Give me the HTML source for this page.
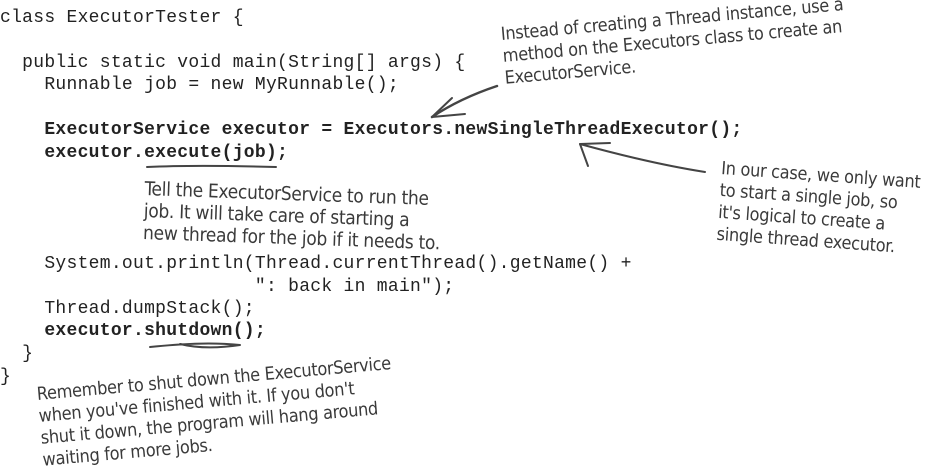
<!DOCTYPE html>
<html><head><meta charset="utf-8"><style>
body{margin:0;width:925px;height:469px;background:#fff;position:relative;overflow:hidden}
.c{position:absolute;left:0;font:18px/22px "Liberation Mono",monospace;color:#222;white-space:pre;letter-spacing:0.28px}
.b{font-weight:bold}
.h{position:absolute;font:18px/22px "DejaVu Sans Condensed","DejaVu Sans",sans-serif;color:#3a3a3a;white-space:pre;transform-origin:0 0;letter-spacing:-0.3px}
</style></head><body>
<div class="c" style="top:7px">class ExecutorTester {</div>
<div class="c" style="top:52px">  public static void main(String[] args) {</div>
<div class="c" style="top:74px">    Runnable job = new MyRunnable();</div>
<div class="c b" style="top:119px">    ExecutorService executor = Executors.newSingleThreadExecutor();</div>
<div class="c b" style="top:142px">    executor.execute(job);</div>
<div class="c" style="top:253px">    System.out.println(Thread.currentThread().getName() +</div>
<div class="c" style="top:276px">                       ": back in main");</div>
<div class="c" style="top:298px">    Thread.dumpStack();</div>
<div class="c b" style="top:320px">    executor.shutdown();</div>
<div class="c" style="top:343px">  }</div>
<div class="c" style="top:366px">}</div>

<div class="h" style="left:500px;top:24px;transform:rotate(-5deg)">Instead of creating a Thread instance, use a
method on the Executors class to create an
ExecutorService.</div>
<div class="h" style="left:722px;top:158px;transform:rotate(4deg)">In our case, we only want
to start a single job, so
it's logical to create a
single thread executor.</div>
<div class="h" style="left:145px;top:178px;transform:rotate(2deg);font-size:19px">Tell the ExecutorService to run the
job. It will take care of starting a
new thread for the job if it needs to.</div>
<div class="h" style="left:36px;top:384px;transform:rotate(-5deg)">Remember to shut down the ExecutorService
when you've finished with it. If you don't
shut it down, the program will hang around
waiting for more jobs.</div>

<svg width="925" height="469" style="position:absolute;left:0;top:0" fill="none" stroke="#444" stroke-linecap="round">
<path d="M497 86 C470 95 450 105 432 117" stroke-width="2.5"/>
<path d="M432 117 L465 114 M432 117 L452 98" stroke-width="2"/>
<path d="M705 172 C660 165 620 155 580 144" stroke-width="2"/>
<path d="M580 144 L610 143 M580 144 L588 166" stroke-width="2"/>
<path d="M147 167 C190 165 240 166 276 167" stroke-width="2"/>
<path d="M150 347 C180 344 210 342 240 345 M180 344 C200 349 220 348 240 345" stroke-width="2"/>
</svg>
</body></html>
